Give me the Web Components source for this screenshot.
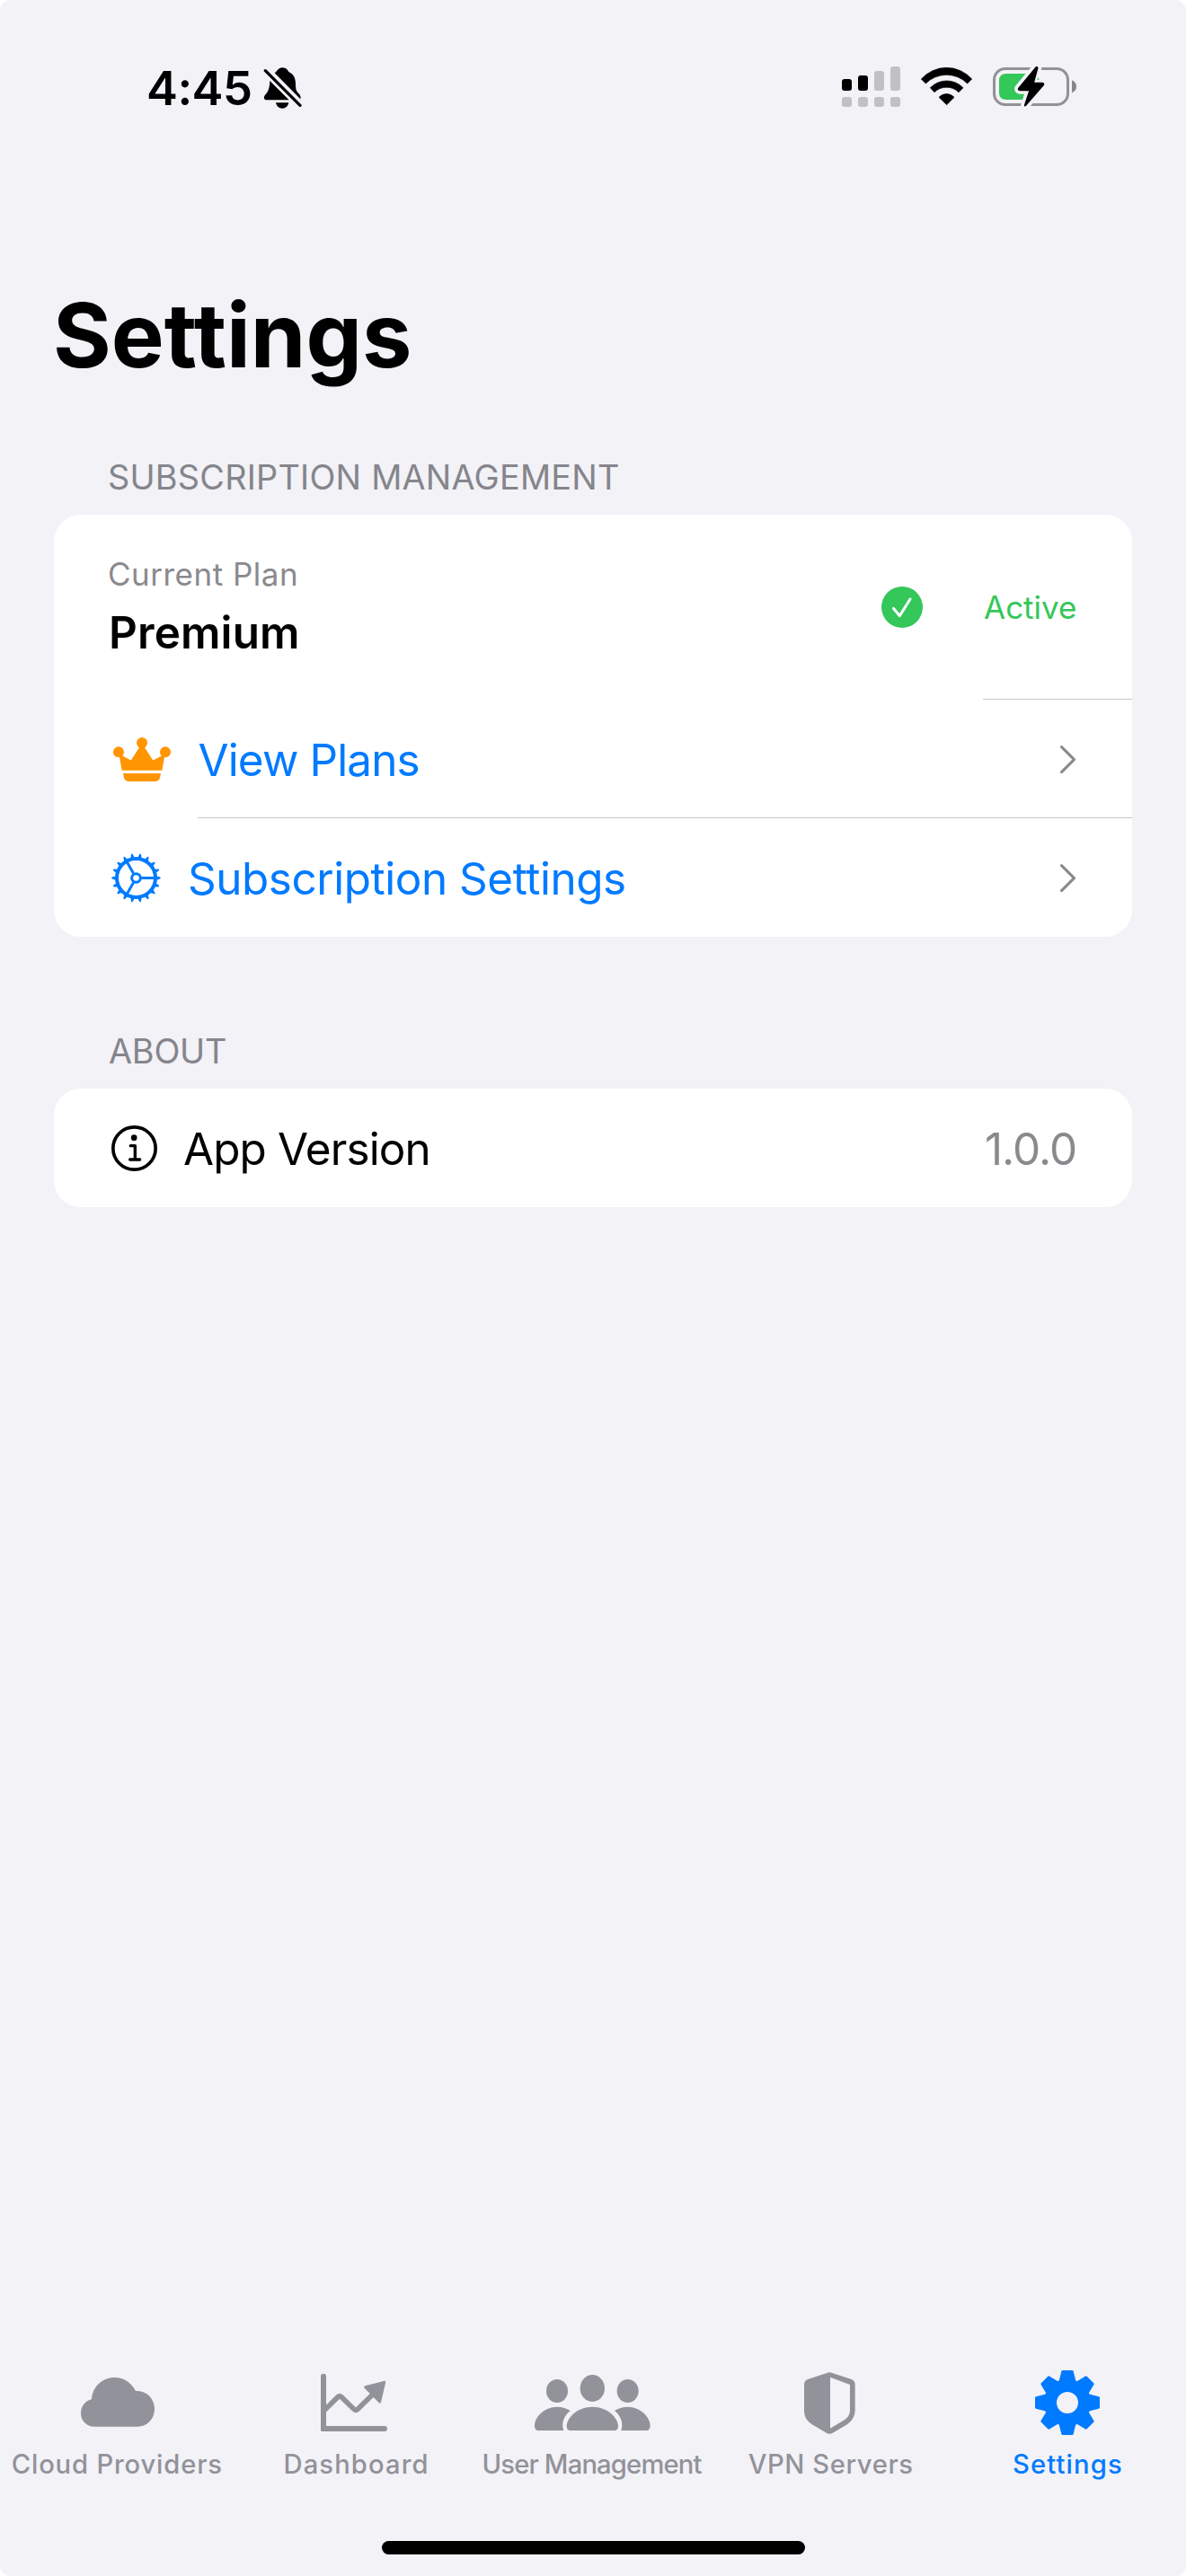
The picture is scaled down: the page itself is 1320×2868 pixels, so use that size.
<!DOCTYPE html>
<html lang="en">
<head>
<meta charset="utf-8">
<title>Settings</title>
<style>
  html, body { margin: 0; background: #fff; }
  body { width: 1320px; font-family: Inter, "Liberation Sans", sans-serif; }
</style>
</head>
<body>
<settings-screen></settings-screen>

<script>
const define = (name, html, setup) => {
  const template = document.createElement('template');
  template.innerHTML = html;
  customElements.define(name, class extends HTMLElement {
    connectedCallback() {
      if (this.shadowRoot) return;
      const root = this.attachShadow({ mode: 'open' });
      root.append(template.content.cloneNode(true));
      if (setup) setup(this, root);
    }
  });
};

/* Icon artwork: three drawing units per CSS pixel. */
const teeth = Array.from({ length: 18 }, (_, i) =>
  `<path d="M63-8.5Q71-5 78-3.5Q82-2 82 0Q82 2 78 3.5Q71 5 63 8.5Z" transform="rotate(${i * 20})"/>`).join('');
const cogs = Array.from({ length: 8 }, (_, i) =>
  `<path d="M-16-104H16L25-68H-25Z" transform="rotate(${i * 45})"/>`).join('');
const ICONS = {
  bell: ['879 102 132 144', `<g fill="currentColor">
    <path d="M917 124C926 119 928 106 943 106C956 106 961 115 965 121C980 127 987 142 987 160C987 177 989 183 994 189C1001 196 1006 202 1003 211Z"/>
    <path d="M901 150L965 214H890C881 214 880 206 884 199C890 190 900 185 901 150Z"/>
    <path d="M921 223H964C961 236 953 242 943 242C932 242 924 236 921 223Z"/></g>
    <path d="M886 116L1002 232" stroke="currentColor" stroke-width="10" stroke-linecap="round"/>`],
  signal: ['111 102 195 135', `<g fill="#000"><rect x="111" y="144" width="33" height="39" rx="9"/><rect x="165" y="132" width="33" height="51" rx="9"/></g>
    <g fill="#c1c0c5"><rect x="219" y="117" width="33" height="66" rx="9"/><rect x="273" y="102" width="33" height="81" rx="9"/>
    <rect x="111" y="204" width="33" height="33" rx="9"/><rect x="165" y="204" width="33" height="33" rx="9"/><rect x="219" y="204" width="33" height="33" rx="9"/><rect x="273" y="204" width="33" height="33" rx="9"/></g>`],
  wifi: ['372 102 177 135', `<g fill="currentColor" stroke="currentColor" stroke-width="2" stroke-linejoin="round">
    <path d="M376 144A113 113 0 0 1 545 144L530 159A98 98 0 0 0 391 159Z"/>
    <path d="M406 173A77 77 0 0 1 516 173L501 188A58 58 0 0 0 420 188Z"/>
    <path d="M435 205A34 34 0 0 1 486 205L461 230Z"/></g>`],
  battery: ['615 99 279 141', `<rect x="619.5" y="109.5" width="246" height="120" rx="37" fill="none" stroke="#929196" stroke-width="9"/>
    <path d="M879 148Q894 154 894 169T879 190Z" fill="#87868b"/>
    <path d="M660 126H745V213H660Q636 213 636 189V150Q636 126 660 126Z" fill="#34c759"/>
    <path d="M761 105L702 176Q701 180 706 180H740L723 232L783 163Q785 159 780 159H749L763 107Z" fill="#f2f2f7" stroke="#f2f2f7" stroke-width="29" stroke-linejoin="round"/>
    <path d="M767 138L769 147H763Z" fill="#34c759"/>
    <path d="M761 105L702 176Q701 180 706 180H740L723 232L783 163Q785 159 780 159H749L763 107Z" fill="#000" stroke="#000" stroke-width="7" stroke-linejoin="round"/>`],
  check: ['243 279 138 138', `<circle cx="312" cy="348" r="69" fill="#34c759"/><path d="M283 352L304 377L339 321" fill="none" stroke="#fff" stroke-width="9" stroke-linecap="round" stroke-linejoin="round"/>`],
  chevron: ['840 810 51 93', `<path d="M844.500 815L886.500 857L844.500 899" fill="none" stroke="#8a8a8e" stroke-width="9" stroke-linecap="round" stroke-linejoin="round"/>`],
  crown: ['48 33 192 147', `<g fill="#ff9500"><circle cx="66" cy="82" r="18"/><circle cx="144" cy="51" r="18"/><circle cx="222" cy="82" r="18"/>
    <path d="M68 94L77 143H211L220 94L211 94L184 108Q181 110 179 107L151 63H137L109 107Q107 110 104 108L77 93Z"/>
    <path d="M81 153H207L204 167Q200 180 188 180H100Q88 180 84 167Z"/></g>`],
  gear: ['42 420 165 165', `<g transform="translate(124.5 502.5)" fill="currentColor">${teeth}
    <g fill="none" stroke="currentColor"><circle r="64.5" stroke-width="12"/><circle r="14.5" stroke-width="9"/>
    <path d="M18 0H62M-9-15.6L-31-53.7M-9 15.6L-31 53.7" stroke-width="9"/></g></g>`],
  info: ['252 369 153 153', `<circle cx="328.5" cy="445.5" r="71" fill="none" stroke="currentColor" stroke-width="11"/><circle cx="327.5" cy="410" r="10" fill="currentColor"/>
    <path d="M316 437H331V483M314 483H347" fill="none" stroke="currentColor" stroke-width="10" stroke-linecap="round" stroke-linejoin="round"/>`],
  cloud: ['180 117 432 216', `<path fill="currentColor" d="M316 305C290 305 270 286 270 260C270 237 285 219 306 214C308 172 342 141 383 141C413 141 439 158 453 186C489 184 516 211 516 246C516 280 491 305 459 305Z"/>`],
  chart: ['972 117 432 216', `<g fill="none" stroke="currentColor" stroke-linecap="round"><path d="M1080 137V312H1284" stroke-width="18" stroke-linejoin="round"/>
    <path d="M1084 250L1127 207Q1134 198 1141 207L1181 246Q1188 253 1195 246L1245 197" stroke-width="17" stroke-linecap="butt"/></g>
    <rect x="1071" y="303" width="18" height="18" rx="4" fill="currentColor"/>
    <path d="M1283 157L1220 173L1268 222Z" fill="currentColor" stroke="currentColor" stroke-width="9" stroke-linejoin="round"/>`],
  people: ['264 117 432 216', `<g fill="currentColor"><ellipse cx="360" cy="186" rx="36" ry="39"/><ellipse cx="478" cy="177" rx="41" ry="45"/><ellipse cx="596" cy="186" rx="36" ry="39"/>
    <path d="M406 318C396 318 392 312 392 303C392 278 425 239 478 239C531 239 564 278 564 303C564 312 560 318 550 318Z"/>
    <path d="M299 318C289 318 285 311 285 302C285 274 317 239 360 239C377 239 392 244 404 252C382 270 374 294 382 318Z"/>
    <path d="M656 318C667 318 671 311 671 302C671 274 639 239 596 239C579 239 564 244 552 252C574 270 582 294 574 318Z"/></g>`],
  shield: ['-144 117 432 216', `<path fill="currentColor" fill-rule="evenodd" d="M63 125Q70 122 77 125L143 147Q155 152 155 165V248C155 272 143 288 125 300L79 327Q70 332 61 327L15 300C-3 288 -15 276 -15 252V165Q-15 152 -3 147ZM72 140V311L119 283C132 275 138 264 138 250V165Z"/>`],
  cog: ['648 117 432 216', `<g transform="translate(864 225)" fill="currentColor"><g stroke="currentColor" stroke-width="8" stroke-linejoin="round">${cogs}</g>
    <circle r="79"/><circle r="36" fill="#f2f2f7"/></g>`]
};

define('ui-icon', `<style>:host{display:block;flex:none}svg{display:block}</style>`, (host, root) => {
  const [box, art] = ICONS[host.getAttribute('name')];
  const [, , w, h] = box.split(' ').map(Number);
  const holder = document.createElement('div');
  holder.innerHTML = `<svg viewBox="${box}" width="${w / 3}" height="${h / 3}" fill="none">${art}</svg>`;
  root.append(holder.firstChild);
});

/* One line of text, tracked so that its drawn glyphs span exactly `span` pixels.
   The line box is one cap height tall, so its bottom edge is the baseline. */
const pen = document.createElement('canvas').getContext('2d');
define('ui-text', `<style>
  :host{display:block;flex:none;white-space:nowrap;line-height:.727;color:inherit}
  span{display:inline-block;line-height:inherit;vertical-align:top}
</style><span><slot></slot></span>`, (host, root) => {
  const size = +host.getAttribute('size'), weight = host.getAttribute('weight') || 400;
  const span = +host.getAttribute('span'), text = host.textContent;
  host.style.cssText += `;font-size:${size}px;font-weight:${weight};width:${span}px;height:${Math.round(size * .727)}px;line-height:${Math.round(size * .727)}px`;
  pen.font = `${weight} ${size}px Inter, "Liberation Sans", sans-serif`;
  const m = pen.measureText(text);
  const ink = m.actualBoundingBoxLeft + m.actualBoundingBoxRight;
  const line = root.querySelector('span');
  line.style.letterSpacing = `${((span - ink) / (text.length - 1)).toFixed(3)}px`;
  line.style.marginLeft = `${m.actualBoundingBoxLeft.toFixed(2)}px`;
});

define('status-bar', `<style>
  :host{display:flex;justify-content:space-between;align-items:flex-start;box-sizing:border-box;height:160px;padding:73px 122px 0 165px}
  .left,.right{display:flex;align-items:flex-start}
  .left ui-text{margin-top:6px}
  .left ui-icon{margin:1px 0 0 14px}
  .right{padding-top:1px}
  .wifi{margin:0 22px}
  .battery{margin-top:-1px}
</style>
<div class="left"><ui-text size="52.5" weight="600" span="114">4:45</ui-text><ui-icon name="bell"></ui-icon></div>
<div class="right"><ui-icon name="signal"></ui-icon><ui-icon class="wifi" name="wifi"></ui-icon><ui-icon class="battery" name="battery"></ui-icon></div>`);

define('list-section', `<style>
  :host{display:block;padding:0 60px}
  .head{padding:0 62px 28px;color:#85858b}
  .card{background:#fff;border-radius:30px;overflow:hidden}
</style><div class="head"><slot name="title"></slot></div><div class="card"><slot></slot></div>`);

define('list-row', `<style>
  :host{display:flex;flex-direction:column;box-sizing:border-box;height:132px}
  .row{flex:1;display:flex;align-items:center;padding:2px 63px 0 var(--lead,64px);gap:var(--gap,30px)}
  ::slotted(ui-text){margin-top:1px}
  .grow{flex:1}
  .line{height:1px;margin-left:var(--inset,160px);background:#c6c6c8}
  :host([last]) .line{display:none}
  :host([last]) .row{padding-top:1px}
</style><div class="row"><slot></slot><div class="grow"></div><slot name="end"></slot></div><div class="line"></div>`);

define('plan-row', `<style>
  :host{display:flex;flex-direction:column;height:206px}
  .row{flex:1;display:flex;align-items:flex-start;justify-content:space-between;padding:0 63px 0 62px}
  .plan{display:flex;flex-direction:column;gap:34px;padding-top:54px}
  .plan ui-text:first-child{color:#8a8a8e}
  .plan ui-text:last-child{margin-left:2px}
  .state{display:flex;align-items:center;gap:68px;padding-top:80px;color:#34c759}
  .line{height:1px;margin-left:1034px;background:#c6c6c8}
</style><div class="row"><div class="plan"><ui-text size="35" span="207">Current Plan</ui-text><ui-text size="49.4" weight="600" span="207">Premium</ui-text></div>
<div class="state"><ui-icon name="check"></ui-icon><ui-text size="35" span="102">Active</ui-text></div></div><div class="line"></div>`);

define('tab-item', `<style>
  :host{display:flex;flex-direction:column;align-items:center;gap:22px;width:264px;color:#92929a}
  :host([selected]){color:#007aff}
</style><slot name="icon"></slot><slot></slot>`);

define('tab-bar', `<style>:host{display:flex;height:190px}</style><slot></slot>`);

define('settings-screen', `<style>
  :host{display:flex;flex-direction:column;box-sizing:border-box;width:1320px;height:2868px;background:#f2f2f7;border-radius:12px;overflow:hidden;color:#000}
  .title{padding:177px 63px 109px}
  .about{margin-top:114px}
  .about [slot=title]{margin-left:-1px}
  .cloud{margin-right:4px}
  .action{color:#007aff}
  .grey{color:#8a8a8e}
  .space{flex:1}
  .home{width:471px;height:15px;border-radius:8px;background:#000;align-self:center;margin-bottom:24px}
</style>
<status-bar></status-bar>
<div class="title"><ui-text size="99" weight="700" span="392">Settings</ui-text></div>
<list-section>
  <ui-text slot="title" size="37.8" span="566">SUBSCRIPTION MANAGEMENT</ui-text>
  <plan-row></plan-row>
  <list-row class="action" style="--lead:66px;--gap:31.5px">
    <ui-icon name="crown"></ui-icon><ui-text size="49.4" span="244">View Plans</ui-text>
    <ui-icon slot="end" name="chevron"></ui-icon>
  </list-row>
  <list-row class="action" last style="--gap:32px">
    <ui-icon name="gear"></ui-icon><ui-text size="49.4" span="484">Subscription Settings</ui-text>
    <ui-icon slot="end" name="chevron"></ui-icon>
  </list-row>
</list-section>
<list-section class="about">
  <ui-text slot="title" size="37.8" span="130">ABOUT</ui-text>
  <list-row last>
    <ui-icon name="info"></ui-icon><ui-text size="49.4" span="271.5">App Version</ui-text>
    <ui-text slot="end" class="grey" size="49.4" span="99">1.0.0</ui-text>
  </list-row>
</list-section>
<div class="space"></div>
<tab-bar>
  <tab-item><ui-icon slot="icon" name="cloud"></ui-icon><ui-text class="cloud" size="29.2" weight="500" span="232.5">Cloud Providers</ui-text></tab-item>
  <tab-item><ui-icon slot="icon" name="chart"></ui-icon><ui-text size="29.2" weight="500" span="157">Dashboard</ui-text></tab-item>
  <tab-item><ui-icon slot="icon" name="people"></ui-icon><ui-text size="29.2" weight="500" span="243">User Management</ui-text></tab-item>
  <tab-item><ui-icon slot="icon" name="shield"></ui-icon><ui-text size="29.2" weight="500" span="182.5">VPN Servers</ui-text></tab-item>
  <tab-item selected><ui-icon slot="icon" name="cog"></ui-icon><ui-text size="29.2" weight="500" span="120">Settings</ui-text></tab-item>
</tab-bar>
<div class="home"></div>`);
</script>
</body>
</html>
